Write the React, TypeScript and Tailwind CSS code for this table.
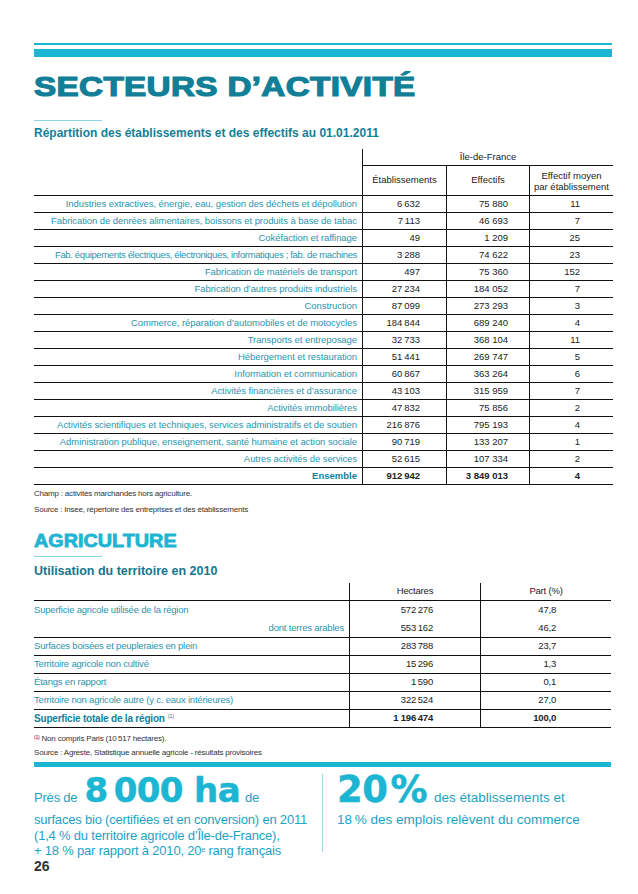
import React from "react";

const rows1: [string, string, string, string][] = [
  ["Industries extractives, énergie, eau, gestion des déchets et dépollution", "6\u2009632", "75 880", "11"],
  ["Fabrication de denrées alimentaires, boissons et produits à base de tabac", "7\u2009113", "46 693", "7"],
  ["Cokéfaction et raffinage", "49", "1 209", "25"],
  ["Fab. équipements électriques, électroniques, informatiques ; fab. de machines", "3\u2009288", "74 622", "23"],
  ["Fabrication de matériels de transport", "497", "75 360", "152"],
  ["Fabrication d’autres produits industriels", "27\u2009234", "184 052", "7"],
  ["Construction", "87\u2009099", "273 293", "3"],
  ["Commerce, réparation d’automobiles et de motocycles", "184\u2009844", "689 240", "4"],
  ["Transports et entreposage", "32\u2009733", "368 104", "11"],
  ["Hébergement et restauration", "51\u2009441", "269 747", "5"],
  ["Information et communication", "60\u2009867", "363 264", "6"],
  ["Activités financières et d’assurance", "43\u2009103", "315 959", "7"],
  ["Activités immobilières", "47\u2009832", "75 856", "2"],
  ["Activités scientifiques et techniques, services administratifs et de soutien", "216\u2009876", "795 193", "4"],
  ["Administration publique, enseignement, santé humaine et action sociale", "90\u2009719", "133 207", "1"],
  ["Autres activités de services", "52\u2009615", "107 334", "2"],
];

const agri: [string, string, string][] = [
  ["Surfaces boisées et peupleraies en plein", "283\u2009788", "23,7"],
  ["Territoire agricole non cultivé", "15\u2009296", "1,3"],
  ["Étangs en rapport", "1\u2009590", "0,1"],
  ["Territoire non agricole autre (y c. eaux intérieures)", "322\u2009524", "27,0"],
];

export default function App() {
  return (
    <div className="w-[638px] h-[894px] bg-white font-['Liberation_Sans',Arial,sans-serif] text-[#222] overflow-hidden">
      <div className="pt-[43px] pl-[34px] pr-[26px]">
        <div className="h-[2px] bg-[#1bb6d1]" />
        <div className="h-[8px] mt-[4px] bg-[#1bb6d1]" />
        <h1 className="mt-[16px] h-[28px] text-[27px] leading-[28px] font-bold text-[#127f97] whitespace-nowrap origin-left scale-x-[1.23] tracking-[0.3px] [-webkit-text-stroke:1.2px_#127f97]">
          SECTEURS D’ACTIVITÉ
        </h1>
        <div className="mt-[19px] w-[68px] h-px bg-[#8dd5e4]" />
        <div className="mt-[5px] text-[12px] leading-[15px] font-bold text-[#127f97]">
          Répartition des établissements et des effectifs au 01.01.2011
        </div>
      </div>

      {/* Table 1 */}
      <div className="mt-[8px] ml-[34px] w-[579px] text-[9.5px]">
        <div className="flex h-[17px]">
          <div className="w-[328px]" />
          <div className="flex-1 border-l border-b border-[#111] flex items-center justify-center">Île-de-France</div>
        </div>
        <div className="flex h-[30px] border-b border-[#111]">
          <div className="w-[328px]" />
          <div className="w-[84px] border-l border-[#111] flex items-center justify-center">Établissements</div>
          <div className="w-[83px] border-l border-[#111] flex items-center justify-center">Effectifs</div>
          <div className="w-[84px] border-l border-[#111] flex flex-col items-center justify-center leading-[11px] text-center">
            <span>Effectif moyen</span>
            <span>par établissement</span>
          </div>
        </div>
        {rows1.map((r, i) => (
          <div key={i} className="flex h-[17px] border-b border-[#111]">
            <div className={`w-[328px] pr-[5px] text-right text-[#2a95ad] flex items-center justify-end whitespace-nowrap ${i === 3 ? "tracking-[-0.35px]" : "tracking-[-0.07px]"}`}>{r[0]}</div>
            <div className="w-[84px] border-l border-[#111] pr-[26px] flex items-center justify-end">{r[1]}</div>
            <div className="w-[83px] border-l border-[#111] pr-[21px] flex items-center justify-end">{r[2]}</div>
            <div className="w-[84px] border-l border-[#111] pr-[33px] flex items-center justify-end">{r[3]}</div>
          </div>
        ))}
        <div className="flex h-[17px] border-b border-[#111] font-bold">
          <div className="w-[328px] pr-[5px] text-[#127f97] flex items-center justify-end">Ensemble</div>
          <div className="w-[84px] border-l border-[#111] pr-[26px] flex items-center justify-end">912{"\u2009"}942</div>
          <div className="w-[83px] border-l border-[#111] pr-[21px] flex items-center justify-end">3 849 013</div>
          <div className="w-[84px] border-l border-[#111] pr-[33px] flex items-center justify-end">4</div>
        </div>
      </div>

      <div className="ml-[34px] mt-px text-[8px] leading-[16px] tracking-[-0.2px] text-[#333]">
        <div>Champ : activités marchandes hors agriculture.</div>
        <div>Source : Insee, répertoire des entreprises et des établissements</div>
      </div>

      <div className="ml-[34px]">
        <h2 className="mt-[14px] h-[19px] text-[18px] leading-[19px] font-bold text-[#1fb5d2] whitespace-nowrap origin-left scale-x-[1.1] [-webkit-text-stroke:0.8px_#1fb5d2]">
          AGRICULTURE
        </h2>
        <div className="mt-[5px] w-[68px] h-px bg-[#8dd5e4]" />
        <div className="mt-[7px] text-[12.5px] leading-[15px] font-bold text-[#15768e]">
          Utilisation du territoire en 2010
        </div>
      </div>

      {/* Table 2 */}
      <div className="mt-[4px] ml-[34px] w-[577px] text-[9.5px] tracking-[-0.2px]">
        <div className="flex h-[18px] border-b border-[#111]">
          <div className="w-[315px]" />
          <div className="w-[131px] border-l border-[#111] flex items-center justify-center">Hectares</div>
          <div className="flex-1 border-l border-[#111] flex items-center justify-center">Part (%)</div>
        </div>
        <div className="flex h-[37px] border-b border-[#111]">
          <div className="w-[315px] flex flex-col text-[#2a95ad]">
            <div className="h-[18px] flex items-center">Superficie agricole utilisée de la région</div>
            <div className="h-[18px] flex items-center justify-end pr-[5px]">dont terres arables</div>
          </div>
          <div className="w-[131px] border-l border-[#111] pr-[47px] flex flex-col items-end">
            <div className="h-[18px] flex items-center">572{"\u2009"}276</div>
            <div className="h-[18px] flex items-center">553{"\u2009"}162</div>
          </div>
          <div className="flex-1 border-l border-[#111] pr-[55px] flex flex-col items-end">
            <div className="h-[18px] flex items-center">47,8</div>
            <div className="h-[18px] flex items-center">46,2</div>
          </div>
        </div>
        {agri.map((r, i) => (
          <div key={i} className="flex h-[18px] border-b border-[#111]">
            <div className="w-[315px] text-[#2a95ad] flex items-center">{r[0]}</div>
            <div className="w-[131px] border-l border-[#111] pr-[47px] flex items-center justify-end">{r[1]}</div>
            <div className="flex-1 border-l border-[#111] pr-[55px] flex items-center justify-end">{r[2]}</div>
          </div>
        ))}
        <div className="flex h-[18px] border-b border-[#111] font-bold">
          <div className="w-[315px] text-[#127f97] flex items-center text-[10px]">
            Superficie totale de la région<sup className="ml-[3px] text-[5.5px] font-normal">(1)</sup>
          </div>
          <div className="w-[131px] border-l border-[#111] pr-[47px] flex items-center justify-end">1 196{"\u2009"}474</div>
          <div className="flex-1 border-l border-[#111] pr-[55px] flex items-center justify-end">100,0</div>
        </div>
      </div>

      <div className="ml-[34px] mt-[4px] text-[8px] leading-[14px] tracking-[-0.2px] text-[#333]">
        <div><sup className="text-[5px]">(1)</sup> Non compris Paris (10{"\u2009"}517 hectares).</div>
        <div>Source : Agreste, Statistique annuelle agricole - résultats provisoires</div>
      </div>

      <div className="ml-[34px] w-[577px] mt-[2px] h-[5px] bg-[#1bb6d1]" />

      <div className="ml-[34px] flex">
        <div className="w-[288px] pt-[6px] text-[#1da2c3] text-[13px] tracking-[-0.2px]">
          <div className="flex items-baseline h-[35px] leading-[35px]">
            <span>Près de</span>
            <span className="ml-[7px] mr-[5px] text-[34px] font-bold font-['DejaVu_Sans',sans-serif] text-[#1cb5d2] tracking-[-0.6px] [-webkit-text-stroke:0.5px_#1cb5d2]">8{"\u2009"}000 ha</span>
            <span>de</span>
          </div>
          <div className="mt-[4px] leading-[15.5px] whitespace-nowrap">
            <div>surfaces bio (certifiées et en conversion) en 2011</div>
            <div>(1,4 % du territoire agricole d’Île-de-France),</div>
            <div>+ 18 % par rapport à 2010, 20<sup className="text-[7px]">e</sup> rang français</div>
          </div>
        </div>
        <div className="w-px h-[78px] mt-[7px] bg-[#9fd9e6]" />
        <div className="pl-[14px] pt-[4px] text-[#1da2c3] text-[13.5px]">
          <div className="flex items-baseline h-[38px] leading-[38px]">
            <span className="mr-[7px] text-[37px] font-bold font-['DejaVu_Sans',sans-serif] text-[#1cb5d2] tracking-[-0.5px] [-webkit-text-stroke:0.5px_#1cb5d2]">
              20<span className="ml-[3px]">%</span>
            </span>
            <span>des établissements et</span>
          </div>
          <div className="mt-[3px] leading-[15.5px] whitespace-nowrap">18{"\u2009"}% des emplois relèvent du commerce</div>
        </div>
      </div>

      <div className="ml-[34px] text-[14px] leading-[14px] font-bold text-[#333]">26</div>
    </div>
  );
}
